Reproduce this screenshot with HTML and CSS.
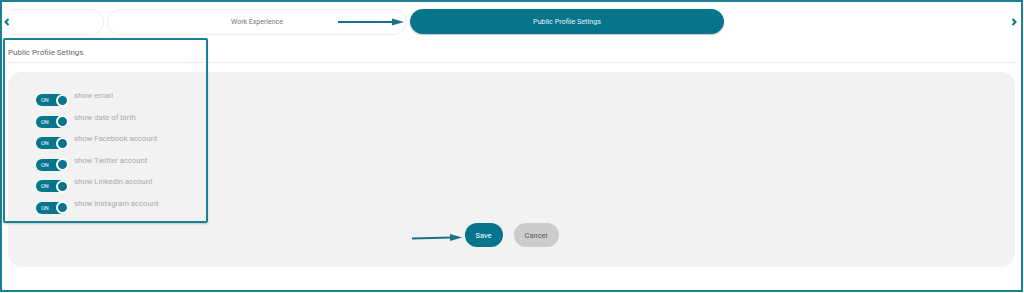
FILE: index.html
```html
<!DOCTYPE html>
<html lang="en">
<head>
    <meta charset="UTF-8">
    <title>Public Profile Setings</title>
    <link rel="stylesheet" href="styles.css">
</head>
<body>
    <div class="frame">
        <div class="tabbar">
            <span class="chev">
                <svg width="6" height="8" viewBox="0 0 6 8"><path d="M4.5 1 L1.5 4 L4.5 7" fill="none" stroke="#05758c" stroke-width="2"/></svg>
            </span>
            <div class="track">
                <div class="tab tab-cut"></div>
                <div class="tab">Work Experience</div>
                <div class="tab active">Public Profile Setings</div>
            </div>
            <span class="chev">
                <svg width="6" height="8" viewBox="0 0 6 8"><path d="M1.5 1 L4.5 4 L1.5 7" fill="none" stroke="#05758c" stroke-width="2"/></svg>
            </span>
        </div>

        <div class="title">Public Profile Setings</div>

        <div class="panel">
            <div class="options">
                <div class="row"><span class="toggle"><span class="on">ON</span><span class="knob"></span></span><span class="label">show email</span></div>
                <div class="row"><span class="toggle"><span class="on">ON</span><span class="knob"></span></span><span class="label">show date of birth</span></div>
                <div class="row"><span class="toggle"><span class="on">ON</span><span class="knob"></span></span><span class="label">show Facebook account</span></div>
                <div class="row"><span class="toggle"><span class="on">ON</span><span class="knob"></span></span><span class="label">show Twitter account</span></div>
                <div class="row"><span class="toggle"><span class="on">ON</span><span class="knob"></span></span><span class="label">show LinkedIn account</span></div>
                <div class="row"><span class="toggle"><span class="on">ON</span><span class="knob"></span></span><span class="label">show Instagram account</span></div>
            </div>
            <div class="actions">
                <button class="btn save">Save</button>
                <button class="btn cancel">Cancel</button>
            </div>
        </div>

        <!-- annotations -->
        <div class="highlight"></div>
        <svg class="arrow arrow-tab" width="66" height="8" viewBox="0 0 66 8">
            <line x1="0" y1="4" x2="56" y2="4" stroke="#1b7189" stroke-width="2.2"/>
            <path d="M54 0.5 L66 4 L54 7.5 Z" fill="#1b7189"/>
        </svg>
        <svg class="arrow arrow-save" width="50" height="8" viewBox="0 0 50 8">
            <line x1="0" y1="4.5" x2="40" y2="3.5" stroke="#1b7189" stroke-width="2.2"/>
            <path d="M38 0 L50 3.5 L38 7 Z" fill="#1b7189"/>
        </svg>
    </div>
</body>
</html>
```

FILE: styles.css
```css
* {
    box-sizing: border-box;
}
body {
    margin: 0;
    font-family: Roboto, "Liberation Sans", sans-serif;
    background: #fff;
}
.frame {
    position: relative;
    width: 1023px;
    height: 292px;
    border: 2px solid #1b7f95;
    padding: 6px 0 0 0;
}
.tabbar {
    display: flex;
    align-items: center;
    height: 27px;
    padding: 0 3px 0 1px;
}
.chev {
    width: 8px;
    display: flex;
    justify-content: center;
}
.track {
    flex: 1;
    display: flex;
    gap: 3px;
    overflow: hidden;
    height: 27px;
    align-items: center;
}
.tab {
    flex: none;
    width: 300px;
    height: 26px;
    border: 1px solid #ededed;
    border-radius: 13px;
    display: flex;
    align-items: center;
    justify-content: center;
    font-size: 7px;
    color: #777;
}
.tab-cut {
    margin-left: -207px;
}
.tab.active {
    width: 314px;
    height: 25px;
    background: #05758c;
    border-color: #05758c;
    color: #e8f3f6;
    font-size: 7.2px;
    box-shadow: 0 1px 2px rgba(0, 0, 0, 0.25);
}
.title {
    margin: 9px 6px 0 6px;
    padding: 4px 0 5px 0;
    font-size: 8px;
    color: #666;
    border-bottom: 1px dotted #ddd;
}
.panel {
    margin: 9px 6px 0 6px;
    height: 195px;
    background: #f2f2f2;
    border-radius: 14px;
    padding: 19px 0 0 28px;
}
.options {
    display: flex;
    flex-direction: column;
}
.row {
    display: flex;
    align-items: flex-start;
    gap: 6px;
    height: 21.5px;
}
.toggle {
    margin-top: 3px;
    width: 32px;
    height: 12px;
    border-radius: 6px;
    background: #05758c;
    display: flex;
    align-items: center;
    justify-content: space-between;
    padding-left: 5px;
}
.on {
    color: #fff;
    font-size: 5.5px;
}
.knob {
    width: 13px;
    height: 13px;
    margin-right: -1px;
    border-radius: 50%;
    background: #05758c;
    border: 2px solid #fff;
}
.label {
    font-size: 7.7px;
    color: #aaa;
    line-height: 10px;
}
.actions {
    display: flex;
    justify-content: center;
    gap: 11px;
    margin: 3px 0 0 -28px;
}
.btn {
    height: 24px;
    border: none;
    border-radius: 12px;
    font-family: Roboto, "Liberation Sans", sans-serif;
    font-size: 7.5px;
    padding: 0;
}
.save {
    width: 38px;
    background: #05758c;
    color: #fff;
}
.cancel {
    width: 45px;
    background: #cccccc;
    color: #555;
}
.highlight {
    position: absolute;
    left: 1px;
    top: 36px;
    width: 205px;
    height: 185px;
    border: 2px solid #1b7f95;
    border-radius: 2px;
    box-shadow: 0 1px 2px rgba(0, 0, 0, 0.2);
}
.arrow {
    position: absolute;
}
.arrow-tab {
    left: 336px;
    top: 16px;
}
.arrow-save {
    left: 410px;
    top: 232px;
}
```
